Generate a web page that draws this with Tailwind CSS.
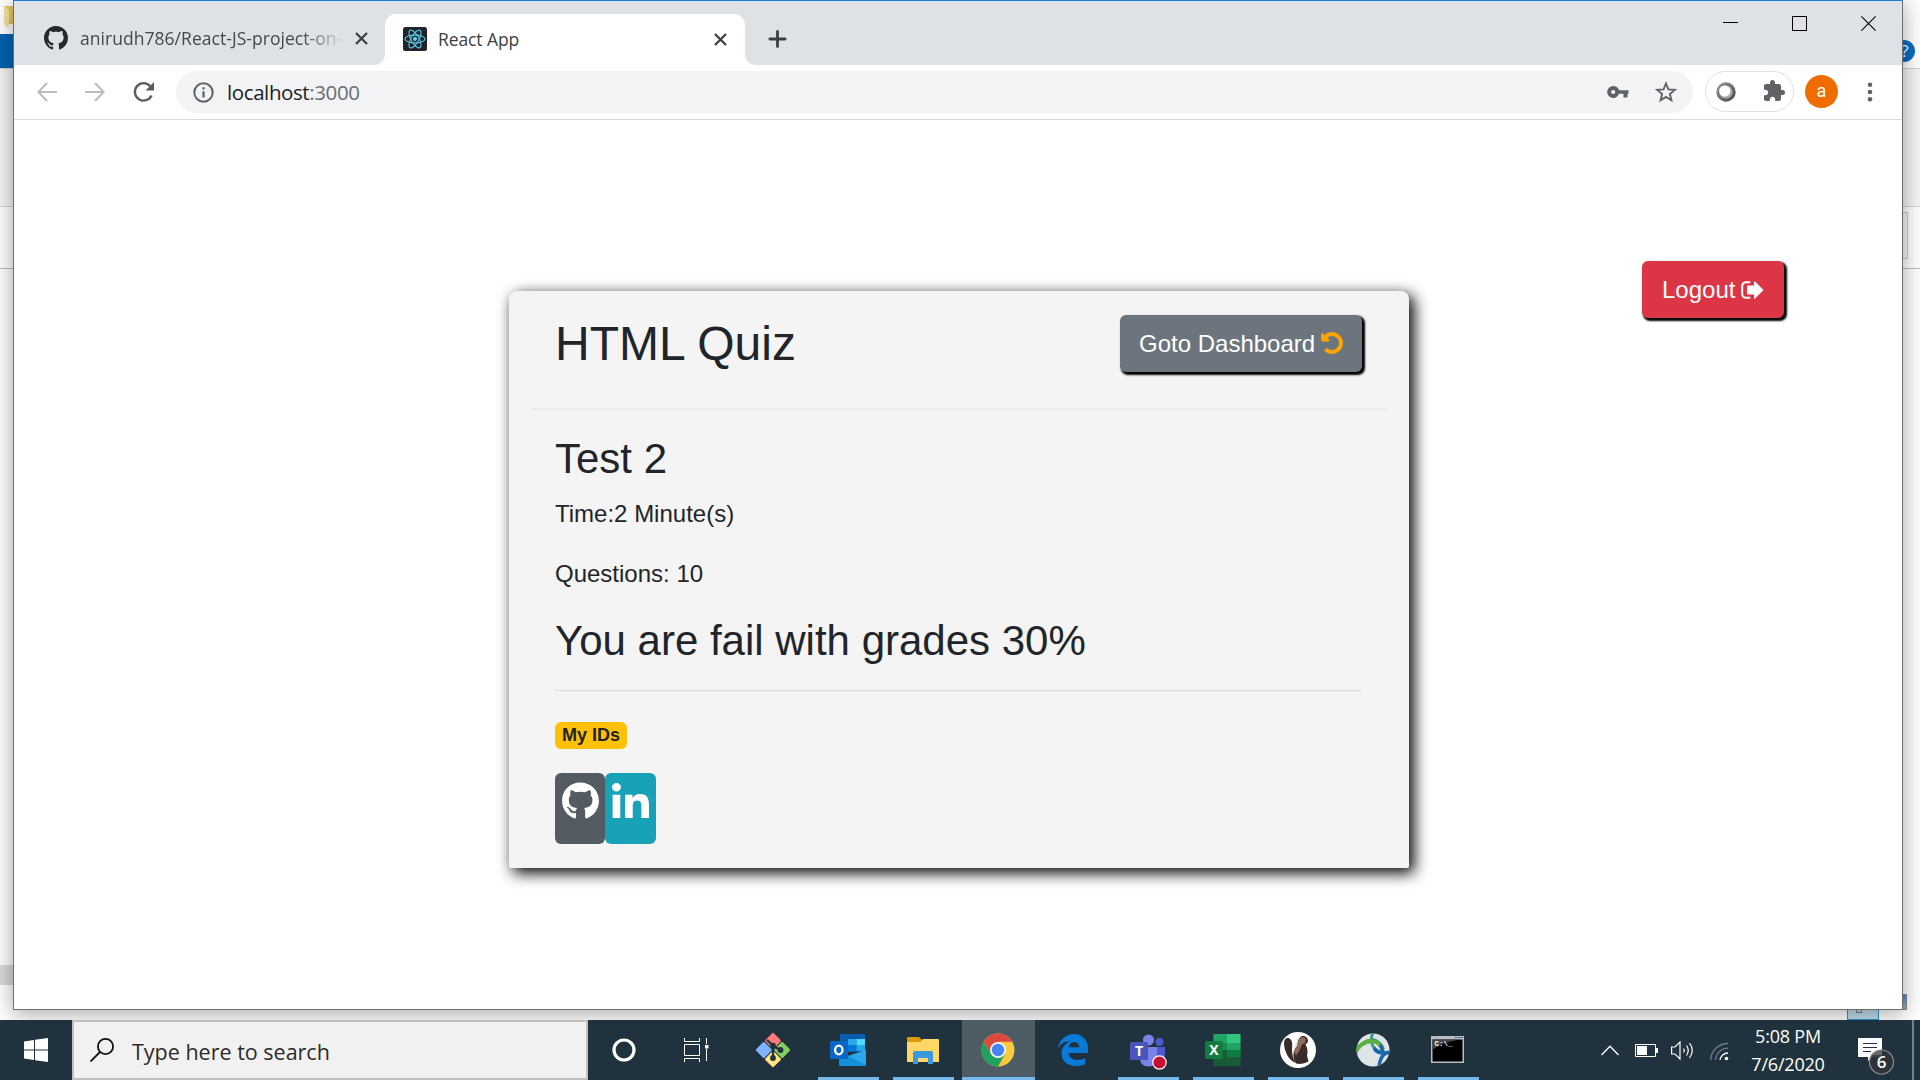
<!DOCTYPE html>
<html lang="en">
<head>
<meta charset="utf-8">
<title>React App</title>
<script src="https://cdn.jsdelivr.net/npm/@tailwindcss/browser@4"></script>
</head>
<body class="relative w-[1920px] h-[1080px] overflow-hidden bg-white font-['Open_Sans',sans-serif]">

<!-- File Explorer window in the background -->
<div class="absolute inset-x-0 top-0 h-[1020px] bg-white flex flex-col">
  <div class="h-[34px] shrink-0 flex items-start">
    <svg class="mt-[6px] ml-[4px]" width="12" height="22" viewBox="0 0 12 22"><path d="M0 0h12v18H4V21L0 18z" fill="#e8c660"/><path d="M0 0l5 4v17l-5-3z" fill="#f8e3a0"/></svg>
  </div>
  <div class="h-[34px] shrink-0 flex justify-between">
    <div class="w-5 bg-[#0063b1]"></div>
    <svg width="32" height="34" viewBox="0 0 32 34"><circle cx="16" cy="17" r="11" fill="#0a6cc4"/><text x="17" y="23" text-anchor="middle" font-size="17" fill="#fff">?</text></svg>
  </div>
  <div class="h-[139px] shrink-0 bg-[#f4f5f7] border-y border-[#d2d3d5]"></div>
  <div class="h-[62px] shrink-0 border-b border-[#bdbdbd] flex justify-end">
    <div class="mt-[5px] mr-3 w-10 h-[47px] border border-[#c8c8c8] bg-[#f6f6f6]"></div>
  </div>
  <div class="mt-[696px] h-5 w-10 shrink-0 bg-[#dadada]"></div>
  <div class="flex h-[35px] shrink-0 items-end justify-between pl-[26px] text-[#33456b]">
    <div class="flex gap-10 text-[17px] leading-[26px] pb-[3px] tracking-[-0.500px]"><span>1 item</span><span>1 item selected</span></div>
    <div class="flex h-full items-end">
      <div class="w-8 h-[26px] border border-[#2a93cc] bg-[#bfdcec] flex justify-center pt-[10px]"><div class="mr-2 h-[8px] w-[6px] border border-[#777]"></div></div>
      <div class="mb-[10px] mr-[13px] ml-3 w-[16px] h-4 border border-[#8a8a8a] bg-linear-to-b from-[#4385e8] to-[#8fb5a0]"></div>
    </div>
  </div>
</div>

<!-- Browser window -->
<div class="absolute left-[13px] top-0 w-[1890px] h-[1010px] bg-white border border-[#6d6e70] border-t-[#1a80d6] shadow-[0_3px_20px_1px_rgba(0,0,0,0.34)] flex flex-col">
  <!-- Tab strip -->
  <div class="h-16 shrink-0 bg-[#dee1e6] flex">
    <div class="w-[371px] pl-[30px] pt-2 flex items-center text-[17.500px] text-[#45494d]">
      <svg class="mt-px" width="24" height="24" viewBox="0 0 16 16" fill="#24292e"><path d="M8 0C3.580 0 0 3.580 0 8c0 3.540 2.290 6.530 5.470 7.590.4.070.55-.17.55-.38 0-.19-.01-.82-.01-1.490-2.010.37-2.530-.49-2.690-.94-.09-.23-.48-.94-.82-1.130-.28-.15-.68-.52-.01-.53.63-.01 1.080.58 1.230.82.72 1.210 1.870.87 2.330.66.07-.52.28-.87.51-1.070-1.780-.2-3.640-.89-3.640-3.950 0-.87.31-1.590.82-2.150-.08-.2-.36-1.020.08-2.120 0 0 .67-.21 2.200.82.64-.18 1.320-.27 2-.27s1.360.09 2 .27c1.530-1.040 2.200-.82 2.200-.82.44 1.100.16 1.920.08 2.120.51.56.82 1.270.82 2.150 0 3.070-1.870 3.750-3.650 3.950.29.25.54.73.54 1.480 0 1.070-.01 1.930-.01 2.200 0 .21.15.46.55.38A8.010 8.010 0 0 0 16 8c0-4.420-3.580-8-8-8z"/></svg>
      <span class="ml-3 mt-[2px] w-[264px] overflow-hidden whitespace-nowrap tracking-[0.040px] mask-r-from-84%">anirudh786/React-JS-project-on-</span>
      <svg class="ml-[11px] mt-[2px]" width="13" height="13" viewBox="0 0 13 13" stroke="#3c4043" stroke-width="2.300"><path d="M1 1l11 11M12 1L1 12"/></svg>
    </div>
    <div class="w-[360px] h-[51px] mt-[13px] bg-white rounded-t-[11px] relative flex items-center text-[17.500px] text-[#3c4043]">
      <svg class="absolute -left-[11px] bottom-0" width="11" height="11"><path d="M11 0V11H0A11 11 0 0 0 11 0z" fill="#fff"/></svg>
      <svg class="absolute -right-[11px] bottom-0" width="11" height="11"><path d="M0 0V11H11A11 11 0 0 1 0 0z" fill="#fff"/></svg>
      <svg class="ml-[18px] mb-px" width="24" height="24" viewBox="-12 -12 24 24"><rect x="-12" y="-12" width="24" height="24" rx="2.500" fill="#20232a"/><g fill="none" stroke="#5ac8e4" stroke-width="1.100"><ellipse rx="10" ry="3.900"/><ellipse rx="10" ry="3.900" transform="rotate(60)"/><ellipse rx="10" ry="3.900" transform="rotate(120)"/></g><circle r="2" fill="#61dafb"/></svg>
      <span class="ml-[11px] w-[276px] mb-px tracking-[-0.100px]">React App</span>
      <svg class="mb-px" width="13" height="13" viewBox="0 0 13 13" stroke="#3c4043" stroke-width="2.300"><path d="M1 1l11 11M12 1L1 12"/></svg>
    </div>
    <svg class="ml-[23px] mt-[29px]" width="19" height="18" stroke="#3c4043" stroke-width="2.800" stroke-linecap="round"><path d="M9.500 1.400v15.200M1.900 9h15.200"/></svg>
    <div class="ml-auto mr-[26px] mt-[15px] flex gap-[54px]">
      <svg width="15" height="15"><path d="M0 6.500h15" stroke="#000"/></svg>
      <svg width="15" height="15"><rect x=".5" y=".5" width="14" height="14" fill="none" stroke="#000"/></svg>
      <svg width="15" height="15"><path d="M.4.4l14.200 14.200M14.600.4L.4 14.600" stroke="#000" stroke-width="1.100"/></svg>
    </div>
  </div>
  <!-- Toolbar -->
  <div class="h-[55px] shrink-0 border-b border-[#d9dadc] flex items-center">
    <svg class="ml-[23px] mb-px" width="20" height="20" fill="none" stroke="#babcbe" stroke-width="2"><path d="M20 10H1.500M10 1L1.300 10l8.700 9"/></svg>
    <svg class="ml-7 mb-px" width="20" height="20" fill="none" stroke="#babcbe" stroke-width="2"><path d="M0 10h18.500M10 1l8.700 9-8.700 9"/></svg>
    <svg class="ml-7 mb-px" width="22" height="22" viewBox="0 0 22 22"><path d="M18.500 14.500a8.700 8.700 0 1 1-1.300-9.300" fill="none" stroke="#5a5d61" stroke-width="2.400"/><path d="M21 1v8.500h-8.500z" fill="#5a5d61"/></svg>
    <div class="ml-[21px] w-[1517px] h-[42px] rounded-full bg-[#f1f3f4] flex items-center pl-[17px] pr-4 text-[20.500px] text-[#202124]">
      <svg width="21" height="21" viewBox="0 0 21 21"><circle cx="10.500" cy="10.500" r="9.200" fill="none" stroke="#5f6368" stroke-width="2"/><path d="M10.500 9.300v6.200M10.500 5.300v2.200" stroke="#5f6368" stroke-width="2.300"/></svg>
      <span class="ml-[13px] tracking-[-0.400px] whitespace-nowrap">localhost<span class="text-[#6a6e72]">:3000</span></span>
      <svg class="ml-auto mb-px" width="22" height="14" viewBox="0 0 22 14"><path fill-rule="evenodd" fill="#5f6368" d="M6.200 1a6 6 0 0 1 5.700 4.200H21.500v3.600H20.500v3.700h-4V8.800H11.900A6 6 0 1 1 6.200 1zm0 3.900a2.100 2.100 0 1 0 0 4.200 2.100 2.100 0 0 0 0-4.200z"/></svg>
      <svg class="ml-[26px]" width="22" height="22" viewBox="0 0 22 22"><path d="M11 2.500l2.400 5.900 6.400.5-4.900 4.100 1.500 6.200L11 15.900l-5.400 3.300 1.500-6.200-4.900-4.100 6.400-.5z" fill="none" stroke="#5f6368" stroke-width="1.900"/></svg>
    </div>
    <div class="ml-3 mb-px w-[89px] h-[41px] rounded-full border border-[#dfe0e2] flex items-center pl-[10px] gap-[26px]">
      <svg width="20" height="20" viewBox="0 0 20 20"><defs><linearGradient id="ring" x1="0" y1="0" x2="1" y2="1"><stop offset="0" stop-color="#999"/><stop offset="1" stop-color="#444"/></linearGradient></defs><circle cx="10" cy="10" r="9.700" fill="url(#ring)"/><circle cx="10" cy="10" r="6.600" fill="#aaa"/><circle cx="8.700" cy="9" r="5.600" fill="#fff"/></svg>
      <svg class="mb-[2px]" width="24" height="24" viewBox="0 0 24 24" fill="#5f6368"><path d="M20.500 11H19V7c0-1.100-.9-2-2-2h-4V3.500a2.500 2.500 0 0 0-5 0V5H4c-1.100 0-1.990.9-1.990 2v3.800H3.500c1.490 0 2.700 1.210 2.700 2.700s-1.210 2.700-2.700 2.700H2V20c0 1.100.9 2 2 2h3.800v-1.500c0-1.490 1.210-2.700 2.700-2.700s2.700 1.210 2.700 2.700V22H17c1.100 0 2-.9 2-2v-4h1.500a2.500 2.500 0 0 0 0-5z"/></svg>
    </div>
    <div class="ml-[11px] mb-px size-[33px] rounded-full bg-[#ef6c00] text-white text-[18px] leading-[31px] text-center font-[Roboto,sans-serif]">a</div>
    <svg class="ml-[29px] mb-px" width="6" height="20" fill="#5f6368"><circle cx="3" cy="2.700" r="2.300"/><circle cx="3" cy="10" r="2.300"/><circle cx="3" cy="17.300" r="2.300"/></svg>
  </div>

  <!-- Page -->
  <div class="grow flex justify-end items-start font-['Liberation_Sans',Arial,sans-serif] text-[24px] leading-9 text-[#212529]">
    <main class="mt-[171px] w-[900px] h-[577px] px-[22px] bg-[#f4f4f4] rounded-t-[8px] rounded-b-[2px] shadow-[4.5px_4.5px_15px_#000]">
      <div class="h-[119px] pl-6 pr-[25px] pb-[12px] border-b-2 border-[#e9ecef] flex items-center justify-between">
        <h1 class="text-[48px] leading-[58px]">HTML Quiz</h1>
        <button class="h-[57px] w-[242px] pl-[19px] rounded-[6px] bg-[#6c757d] text-white shadow-[2px_2px_2px_1px_#000] flex items-center whitespace-nowrap">Goto Dashboard
          <svg class="ml-[6px] mb-px" width="22" height="22" viewBox="0 0 512 512" fill="#ffa500" stroke="#ffa500" stroke-width="14"><path d="M255.545 8c-66.269.119-126.438 26.233-170.860 68.685L48.971 40.971C33.851 25.851 8 36.559 8 57.941V192c0 13.255 10.745 24 24 24h134.059c21.382 0 32.090-25.851 16.971-40.971l-41.750-41.750c30.864-28.899 70.801-44.907 113.230-45.273 92.398-.798 170.283 73.977 169.484 169.442C423.236 348.009 349.816 424 256 424c-41.127 0-79.997-14.678-110.630-41.556-4.743-4.161-11.906-3.908-16.368.553L89.340 422.659c-4.872 4.872-4.631 12.815.482 17.433C133.798 479.813 192.074 504 256 504c136.966 0 247.999-111.033 248-247.998C504.001 119.193 392.354 7.755 255.545 8z"/></svg>
        </button>
      </div>
      <div class="pl-6 pr-[25px] pt-[24px]">
        <h3 class="text-[42px] leading-[50px] mb-3">Test 2</h3>
        <p class="mb-6">Time:2 Minute(s)</p>
        <p class="mb-6">Questions: 10</p>
        <h3 class="text-[42px] leading-[50px] mb-6">You are fail with grades 30%</h3>
        <div class="h-px bg-[#dcdcdc]"></div>
        <div class="mt-[31px] w-[72px] h-[27px] rounded-[6px] bg-[#ffc107] text-[18px] leading-[27px] font-bold text-center whitespace-nowrap">My IDs</div>
        <div class="mt-6 flex">
          <div class="w-[50px] h-[71px] rounded-[6px] bg-[#545b62] flex justify-center pt-[9px]"><svg width="37" height="38" viewBox="0 0 496 512" fill="#fff"><path d="M165.900 397.400c0 2-2.300 3.600-5.200 3.600-3.300.3-5.600-1.300-5.600-3.600 0-2 2.300-3.600 5.200-3.600 3-.3 5.600 1.300 5.600 3.600zm-31.100-4.500c-.7 2 1.300 4.300 4.300 4.900 2.600 1 5.600 0 6.200-2s-1.300-4.300-4.300-5.200c-2.600-.7-5.500.3-6.200 2.300zm44.200-1.700c-2.900.7-4.900 2.600-4.600 4.900.3 2 2.900 3.300 5.900 2.600 2.900-.7 4.900-2.600 4.600-4.600-.3-1.900-3-3.200-5.900-2.900zM244.800 8C106.100 8 0 113.300 0 252c0 110.900 69.800 205.800 169.500 239.200 12.800 2.300 17.300-5.600 17.300-12.100 0-6.200-.3-40.400-.3-61.400 0 0-70 15-84.700-29.800 0 0-11.400-29.100-27.800-36.600 0 0-22.900-15.700 1.600-15.400 0 0 24.900 2 38.600 25.800 21.900 38.600 58.600 27.500 72.900 20.900 2.300-16 8.800-27.100 16-33.700-55.900-6.200-112.300-14.300-112.300-110.500 0-27.500 7.600-41.300 23.600-58.900-2.600-6.500-11.100-33.300 2.600-67.900 20.900-6.500 69 27 69 27 20-5.600 41.500-8.500 62.800-8.500s42.800 2.900 62.800 8.500c0 0 48.100-33.600 69-27 13.700 34.700 5.200 61.400 2.600 67.900 16 17.700 25.800 31.500 25.800 58.900 0 96.500-58.900 104.200-114.800 110.500 9.200 7.900 17 22.900 17 46.400 0 33.700-.3 75.400-.3 83.600 0 6.500 4.600 14.400 17.300 12.100C428.200 457.800 496 362.900 496 252 496 113.300 383.500 8 244.800 8z"/></svg></div>
          <div class="w-[51px] h-[71px] rounded-[6px] bg-[#17a2b8] flex justify-center pt-[10px]"><svg width="37" height="35" viewBox="0 0 448 448" preserveAspectRatio="none" fill="#fff"><path d="M100.280 448H7.400V148.900h92.880zM53.790 108.100C24.090 108.100 0 83.500 0 53.800a53.790 53.790 0 0 1 107.580 0c0 29.700-24.100 54.300-53.790 54.300zM447.900 448h-92.680V302.400c0-34.700-.7-79.200-48.290-79.200-48.290 0-55.690 37.700-55.690 76.700V448h-92.780V148.900h89.080v40.800h1.300c12.400-23.500 42.690-48.300 87.880-48.300 94 0 111.280 61.900 111.280 142.300V448z"/></svg></div>
        </div>
      </div>
    </main>
    <button class="mt-[141px] ml-[233px] mr-[118px] h-[57px] w-[142px] pl-[20px] rounded-[6px] bg-[#dc3545] text-white shadow-[2px_2px_2px_1px_#000] flex items-center">Logout
      <svg class="ml-[6px]" width="23" height="18" viewBox="0 0 23 18"><path d="M8.500 1.200H5A3.800 3.800 0 0 0 1.200 5v8A3.800 3.800 0 0 0 5 16.800h3.500" fill="none" stroke="#fff" stroke-width="2" stroke-linecap="round"/><path d="M13 .8q0-1 1-.4l8 8q.5.600 0 1.200l-8 8q-1 .6-1-.4V13.500H7q-1 0-1-1v-7q0-1 1-1h6z" fill="#fff"/></svg>
    </button>
  </div>
</div>

<!-- Taskbar -->
<div class="absolute inset-x-0 bottom-0 h-[60px] bg-[#20323d] flex items-center text-white">
  <div class="w-[72px] flex justify-center"><svg width="24" height="24" viewBox="0 0 24 24" fill="#fff"><path d="M0 3.400L10 2v9.400H0zM11 1.800L24 0v11.400H11zM0 12.500h10V22L0 20.600zM11 12.500h13V24l-13-1.800z"/></svg></div>
  <div class="w-[516px] h-full bg-[#f1f1f1] border-2 border-[#c0c0c0] flex items-center pl-4 text-[#2b2b2b] text-[21.500px]">
    <svg width="24" height="24" fill="none" stroke="#111" stroke-width="1.800"><circle cx="15.500" cy="8.500" r="7.600"/><path d="M10 14L.5 23.500"/></svg>
    <span class="ml-[18px] mt-[4px] whitespace-nowrap">Type here to search</span>
  </div>
  <div class="w-[73px] flex justify-center pr-px"><svg width="24" height="24"><circle cx="12" cy="12" r="10" fill="none" stroke="#fff" stroke-width="3.200"/></svg></div>
  <div class="w-[75px] flex justify-center pr-[4px]"><svg width="25" height="24" fill="none" stroke="#fff"><path d="M.5 0v3.500h15V0M.5 24v-3.500h15V24M.5 6.500h15v11H.5zM22.500 0v6M22.500 11v12"/><path d="M21 7h3.500v3.500H21z" fill="#fff" stroke="none"/></svg></div>

  <div class="w-[75px] flex justify-center pr-px"><svg width="36" height="36" viewBox="0 0 36 36"><g transform="rotate(45 18 18)"><rect x="5.500" y="5.500" width="12" height="12" rx="1.500" fill="#ff7b7b"/><rect x="18.500" y="5.500" width="12" height="12" rx="1.500" fill="#83d061"/><rect x="5.500" y="18.500" width="12" height="12" rx="1.500" fill="#80b3ff"/><rect x="18.500" y="18.500" width="12" height="12" rx="1.500" fill="#ffe680"/></g><g fill="none" stroke="#20323d" stroke-width="2.200"><path d="M12 8l6 5.500V27M18 14l7.500 4"/></g><g fill="#20323d"><circle cx="18" cy="13.500" r="2.800"/><circle cx="25.500" cy="18" r="2.900"/><circle cx="18" cy="26" r="2.900"/></g></svg></div>

  <div class="w-[75px] h-full relative flex items-center justify-center pr-[2px]"><svg width="36" height="32" viewBox="0 0 36 32"><path d="M10 0h25v18H10z" fill="#0a5cad"/><path d="M18 5h8.500v6H18z" fill="#28a8ea"/><path d="M26.500 5H35v6h-8.500z" fill="#50d9ff"/><path d="M18 11h8.500v6H18z" fill="#0078d4"/><path d="M26.500 11H35v6h-8.500z" fill="#28a8ea"/><path d="M9 17l9 5 18-6v14.500q0 1.500-1.500 1.500h-24Q9 32 9 30.500z" fill="#1490df"/><path d="M36 16v15L18 22z" fill="#28a8ea"/><rect y="7" width="18" height="18" rx="1.500" fill="#0a66c6"/><ellipse cx="8.800" cy="16" rx="3.700" ry="4.300" fill="none" stroke="#fff" stroke-width="2.300"/></svg><div class="absolute bottom-0 inset-x-[7px] h-[3px] bg-[#76b9ed]"></div></div>

  <div class="w-[75px] h-full relative flex items-center justify-center pr-px"><svg width="32" height="27" viewBox="0 0 32 27"><path d="M0 1q0-1 1-1h11l3 3-2 3H0z" fill="#dd9a06"/><path d="M0 5h13l3-3h15q1 0 1 1v22H0z" fill="#ffd766"/><path d="M6 27V16q0-2 2-2h16q2 0 2 2v11h-5v-6H11v6z" fill="#3a98dc"/></svg><div class="absolute bottom-0 inset-x-[7px] h-[3px] bg-[#76b9ed]"></div></div>

  <div class="w-[75px] h-full relative flex items-center justify-center pr-[2px]"><div class="absolute inset-y-0 left-px w-[73px] bg-[#4d5c65] border-b-3 border-[#76b9ed]"></div><svg class="relative" width="34" height="34" viewBox="-17 -17 34 34"><circle r="16.500" fill="#fbc93c"/><path d="M-14.300-8.300A16.500 16.500 0 0 1 14.300-8.300H0L-7.200 4z" fill="#dc4a3e"/><path d="M-14.300-8.300A16.500 16.500 0 0 0 0 16.500L7.200 4.100 0 8-7.200 4z" fill="#1da261"/><circle r="8" fill="#f4f4f4"/><circle r="6.200" fill="#4285f4"/></svg></div>

  <div class="w-[75px] flex justify-center pr-[2px]"><svg width="30" height="32" viewBox="0 0 30 32"><path d="M0 14.500C1.500 5.500 8 0 16 0c9 0 14 6.500 14 14.500V19H10.500c.3 4.800 4.500 7 9 7 3 0 5.500-.8 7.500-2v6.300c-2.500 1.200-5.500 1.700-9 1.700C9.500 32 3.500 27 3.500 19.500c0-5.500 3-9.500 8-12C6 7.500 2.500 10 0 14.500zM10.600 13.300h10.600c0-3-1.700-5.300-5-5.300-3 0-5 2.100-5.600 5.300z" fill="#0a7ad8"/></svg></div>

  <div class="w-[75px] h-full relative flex items-center justify-center"><svg class="mt-[3px]" width="37" height="36" viewBox="0 0 37 36"><circle cx="29.500" cy="8" r="4" fill="#5059c9"/><circle cx="18.500" cy="6" r="5.500" fill="#7b83eb"/><path d="M25 13h10v9q0 6-6 6h-4z" fill="#5059c9"/><path d="M10 13h17v11q0 8.500-8.500 8.500T10 24z" fill="#7b83eb"/><rect y="8" width="18" height="18" rx="1.500" fill="#4b53bc"/><text x="9" y="22" text-anchor="middle" font-size="14" font-weight="700" fill="#fff">T</text><circle cx="29.500" cy="28.500" r="6.700" fill="#c50f2c" stroke="#fff" stroke-width="1.200"/></svg><div class="absolute bottom-0 inset-x-[7px] h-[3px] bg-[#76b9ed]"></div></div>

  <div class="w-[75px] h-full relative flex items-center justify-center pr-[2px]"><svg width="36" height="32" viewBox="0 0 36 32"><rect x="8.500" width="27" height="32" rx="1" fill="#185c37"/><path d="M8.500 0H22v9H8.500z" fill="#21a366"/><path d="M22 0h13.500v9H22z" fill="#33c481"/><path d="M8.500 9H22v7H8.500z" fill="#1a8a50"/><path d="M22 9h13.500v7H22z" fill="#21a366"/><path d="M22 16h13.500v7H22z" fill="#107c41"/><rect y="7" width="18" height="18" rx="1.500" fill="#107c41"/><text x="9" y="21" text-anchor="middle" font-size="14" font-weight="700" fill="#fff">X</text></svg><div class="absolute bottom-0 inset-x-[7px] h-[3px] bg-[#76b9ed]"></div></div>

  <div class="w-[75px] h-full relative flex items-center justify-center pr-px"><svg width="36" height="36" viewBox="0 0 36 36"><circle cx="18" cy="18" r="18" fill="#fff"/><path d="M15.500 31C8 28 4 18 4 11c0-4 3-6 5.500-4.500 3 2 3 6 2.500 11 0 5 1 9 3.500 13.500z" fill="#3a2a28"/><path d="M16 31.500c-2-3-3-6-2.500-10 .5-3 2-6 4-8 0-5 2-9 5-9.500 3-.3 5.500 2 5.500 5 0 1.500-1.500 2.500-2.500 3.500 2 3 2.500 7 1.500 11l1.500 6q-6 3.500-12.500 2z" fill="#3a2a28"/><path d="M19 7c2-2.500 5-2.500 7 0l-1 4-3 1.500-3 7-3 4-1.500-3c1-4 3.500-8 4.500-13.500z" fill="#8c6d5c"/><path d="M13.500 20c.5-5 3-6 4.500-14" fill="none" stroke="#e6ddd6" stroke-width="1.200"/></svg><div class="absolute bottom-0 inset-x-[7px] h-[3px] bg-[#76b9ed]"></div></div>

  <div class="w-[75px] h-full relative flex items-center justify-center pr-[2px]"><svg class="mb-px" width="34" height="34" viewBox="0 0 34 34"><defs><clipPath id="globe"><circle cx="17" cy="17" r="16.500"/></clipPath></defs><circle cx="17" cy="17" r="16.500" fill="#dfe4e8"/><g clip-path="url(#globe)" fill="none" stroke-width="4"><path d="M-1 21C3 10 10 8 17 8c5 0 9 4 10 9" stroke="#5cb03c"/><path d="M17 0c-3 5-2 12 2 16 2 2 5 3 8 2" stroke="#3f9a86" stroke-width="3"/><path d="M16 7c7 1 10 6 11 13M34 20c-5-1-9 2-11 13M18 15c3 5 9 6 16 4" stroke="#1d66ab" stroke-width="3.500"/><path d="M6 12c5-6 14-5 18 0" stroke="#5cb03c"/></g></svg><div class="absolute bottom-0 inset-x-[7px] h-[3px] bg-[#76b9ed]"></div></div>

  <div class="w-[75px] h-full relative flex items-center justify-center pr-[2px]"><svg class="mb-[2px]" width="33" height="27" viewBox="0 0 33 27"><rect width="33" height="27" fill="#b9bec2"/><path d="M1.500 3.500h30v22h-30z" fill="#000"/><path d="M1.500 3.500h26C18 6 8 8 1.500 14z" fill="#444"/><text x="3.500" y="10" font-size="7.500" font-family="Liberation Mono,monospace" font-weight="700" fill="#fff">C:\_</text><path d="M24 1.500h2M27 1.500h2M30 1.500h2" stroke="#456"/></svg><div class="absolute bottom-0 inset-x-[7px] h-[3px] bg-[#76b9ed]"></div></div>

  <!-- System tray -->
  <div class="ml-auto flex h-full items-center">
    <svg width="18" height="11" fill="none" stroke="#fff" stroke-width="1.300"><path d="M.5 10L9 1.300 17.500 10"/></svg>
    <svg class="ml-4 mt-px" width="23" height="13"><path d="M.5.5h20v12H.5z" fill="none" stroke="#fff"/><path d="M2 2h10v9H2zM21 4h2v5h-2z" fill="#fff"/></svg>
    <svg class="ml-[13px]" width="23" height="19" fill="none" stroke="#fff" stroke-width="1.200"><path d="M.6 6h3.400l5-5v17l-5-5H.6zM12.500 7.500q1.500 2 0 4M15.500 4.500q3.500 5 0 10M18.500 2q5.500 7.500 0 15"/></svg>
    <svg class="ml-[16px] mt-[3px]" width="19" height="19" fill="none"><path d="M.7 18A17 17 0 0 1 18 1.500M5.500 18A12.500 12.500 0 0 1 18 6.200" stroke="#6f7f89" stroke-width="1.300"/><path d="M10 18a8 8 0 0 1 8-7" stroke="#fff" stroke-width="1.300"/><circle cx="16.500" cy="16.500" r="1.800" fill="#fff"/></svg>
    <div class="ml-[14px] w-[90px] text-center text-[18px] leading-[28px] tracking-[-0.200px]"><div>5:08 PM</div><div>7/6/2020</div></div>
    <div class="relative ml-[25px] w-[36px] h-[36px] mt-[12px]">
      <svg width="37" height="37" viewBox="0 0 37 37"><path d="M0 0h24v19H14l-4 4v-4H0z" fill="#fff"/><path d="M5 5.500h14M5 9.500h14M5 13.500h8" stroke="#20323d" stroke-width="1"/><circle cx="23.500" cy="24" r="12" fill="#2d3338" fill-opacity=".93" stroke="#8a8d90" stroke-width="1.200"/><path d="M14 17a12 12 0 0 1 10-5v5z" fill="#777" opacity=".7"/><text x="23.500" y="30" text-anchor="middle" font-size="17" font-weight="600" fill="#fff">6</text></svg>
    </div>
    <div class="ml-[18px] mr-[6px] h-full w-[2px] bg-[#74818a]"></div>
  </div>
</div>
</body>
</html>
